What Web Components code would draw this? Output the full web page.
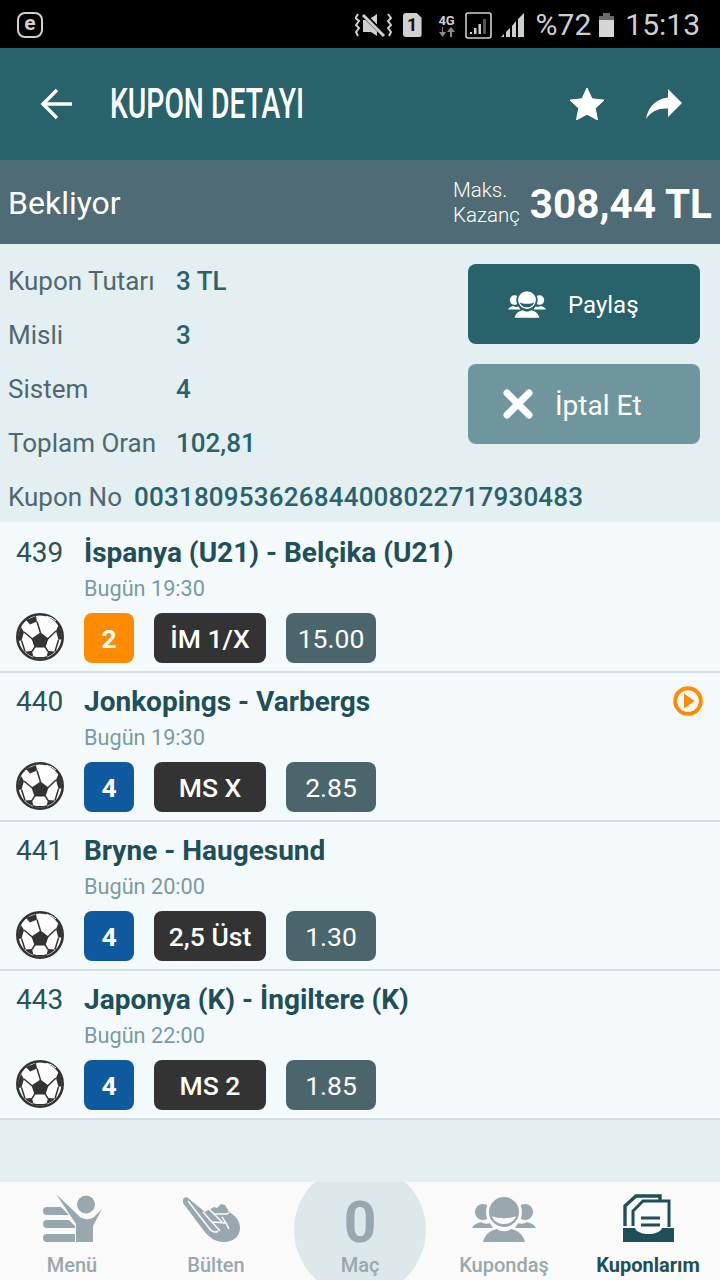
<!DOCTYPE html>
<html lang="tr">
<head>
<meta charset="utf-8">
<title>Kupon Detayı</title>
<style>
    html, body { margin: 0; padding: 0; }
    body {
        width: 720px;
        height: 1280px;
        overflow: hidden;
        display: flex;
        flex-direction: column;
        background: #e4eff2;
        font-family: Roboto, "Noto Sans", sans-serif;
    }
    match-list { flex: 1; }
</style>
</head>
<body>
<status-bar></status-bar>
<app-bar>KUPON DETAYI</app-bar>
<state-bar state="Bekliyor" amount="308,44 TL"></state-bar>
<coupon-info>
    <info-line label="Kupon Tutarı">3 TL</info-line>
    <info-line label="Misli">3</info-line>
    <info-line label="Sistem">4</info-line>
    <info-line label="Toplam Oran">102,81</info-line>
    <action-button slot="actions" icon="people" text="Paylaş"></action-button>
    <action-button slot="actions" icon="close" text="İptal Et" muted></action-button>
    <span slot="number-label">Kupon No</span>
    <span slot="number">003180953626844008022717930483</span>
</coupon-info>
<match-list>
    <match-row code="439" date="Bugün 19:30" system="2" system-color="#ff8c00" bet="İM 1/X" odd="15.00">İspanya (U21) - Belçika (U21)</match-row>
    <match-row code="440" date="Bugün 19:30" system="4" system-color="#0f5a9e" bet="MS X" odd="2.85" live>Jonkopings - Varbergs</match-row>
    <match-row code="441" date="Bugün 20:00" system="4" system-color="#0f5a9e" bet="2,5 Üst" odd="1.30">Bryne - Haugesund</match-row>
    <match-row code="443" date="Bugün 22:00" system="4" system-color="#0f5a9e" bet="MS 2" odd="1.85">Japonya (K) - İngiltere (K)</match-row>
</match-list>
<bottom-nav>
    <nav-item icon="menu" text="Menü"></nav-item>
    <nav-item icon="bulletin" text="Bülten"></nav-item>
    <nav-item count="0" text="Maç"></nav-item>
    <nav-item icon="people" text="Kupondaş"></nav-item>
    <nav-item icon="coupons" text="Kuponlarım" active></nav-item>
</bottom-nav>

<script>
// all icons in one place, fill comes from currentColor
const ICONS = {
    back: `<svg width="32" height="32" viewBox="0 0 32 32" fill="none" stroke="currentColor" stroke-width="3.4"><path d="M32 16H3M17 2 3 16l14 14"/></svg>`,
    star: `<svg width="34" height="32" viewBox="0 0 34 32" fill="currentColor"><path d="M17 0l5 10.800 12 1.300-8.800 8.200 2.400 11.700L17 26.200 6.400 32l2.400-11.700L0 12.100l12-1.300z" stroke="currentColor" stroke-linejoin="round"/></svg>`,
    share: `<svg width="36" height="30" viewBox="0 0 36 30" fill="currentColor"><path d="M22 0l14 14-14 14v-8.500C13 19 5 22 0 30c2-12 10-20 22-21.500z"/></svg>`,
    close: `<svg width="30" height="30" viewBox="0 0 30 30" fill="none" stroke="currentColor" stroke-width="7" stroke-linecap="round"><path d="M4 4l22 22M26 4 4 26"/></svg>`,
    people: `<svg width="64" height="45" viewBox="0 0 64 45" fill="currentColor">
        <circle cx="11" cy="15" r="8"/><circle cx="53" cy="15" r="8"/>
        <path d="M0 31c2-4 6-5 9-6 3 2 6 2 9 1l3 5zM64 31c-2-4-6-5-9-6-3 2-6 2-9 1l-3 5z"/>
        <circle cx="32" cy="15" r="16.500" stroke="var(--icon-gap, #fafafa)" stroke-width="3"/>
        <path d="M20 19c5 3 19 3 24 0-2 6-7 8-12 8s-10-2-12-8z" fill="var(--icon-gap, #fafafa)"/>
        <path d="M11 45c2-9 9-12 14-13 4 3 10 3 14 0 5 1 12 4 14 13z"/>
    </svg>`,
    menu: `<svg width="59" height="48" viewBox="0 0 59 48" fill="currentColor">
        <circle cx="43" cy="10.500" r="9"/>
        <path d="M13 0l23 22c4 4 11 4 15 1l8-8-9 17v16H33V30z"/>
        <path d="M4 13h14l8 8H4a4 4 0 0 1 0-8zM4 26h22l6 6v2H4a4 4 0 0 1 0-8zM4 40h28v8H4a4 4 0 0 1 0-8z"/>
    </svg>`,
    bulletin: `<svg width="58" height="45" viewBox="0 0 58 45" fill="currentColor" style="margin-right:10px">
        <path d="M1 3a3 3 0 0 1 5-2l17 14 9-5 3 1 4-4 4 1 4 7c7 4 11 9 11 16 0 9-8 14-16 14-9 0-14-4-20-11L1 6z"/>
        <path d="M6 4l21 27c3 4 6 5 9 3M21 15l17 19M27 12l14 14M31 17h13l3-1M31 25l13 1-4-6M44 26l3 6" fill="none" stroke="#fafafa" stroke-width="1.600"/>
    </svg>`,
    coupons: `<svg width="51" height="48" viewBox="0 0 51 48" fill="currentColor">
        <path d="M2 32V12L13 2h24v4" fill="none" stroke="currentColor" stroke-width="3.400"/>
        <path d="M10 32V17L20 7h26v26" fill="none" stroke="currentColor" stroke-width="3"/>
        <path d="M18 22.500h19v3H18zM18 29.500h19v3H18z"/>
        <path d="M0 34h12c3 8 24 8 27 0h12v14H0z"/>
    </svg>`,
    play: `<svg width="30" height="30" viewBox="0 0 30 30"><circle cx="15" cy="15" r="12.800" fill="none" stroke="#ff8c00" stroke-width="4"/><path d="M11 7.500 21.500 15 11 22.500z" fill="#ff8c00"/></svg>`,
    ball: `<svg width="48" height="48" viewBox="0 0 48 48">
        <circle cx="24" cy="24" r="22.700" fill="#fff" stroke="#333" stroke-width="2.600"/>
        <path fill="#333" d="M24.500 19.500l8 6-3 9H18.500l-3-9zM10 7l10-4 1 5.500L14 11.500zM40 18l2.500-6c2.500 4 3.500 9 3.500 14l-3.500 1zM2 28c-.3-5 1-10 3-14l3 5L5.500 27.500zM9 38.500l7-.5 1.500 6c-3.500-1-6.500-3-8.500-5.500zM39 38.500l-7-.5-1.500 6c3.500-1 6.500-3 8.500-5.500z"/>
        <path fill="none" stroke="#333" stroke-width="1.500" d="M24.500 20 21 8.500M31.700 26 40 18M16.300 26 8 19M19 33.700 16 38.500M29 33.700 32 38.500M5.500 27.500 9 38.500M42.500 27 39 38.500M17 44c4 1 10 1 14 0"/>
        <path fill="none" stroke="#fff" stroke-width="1" d="M30 3.200Q36 4 40 8"/>
    </svg>`
};

class StatusBar extends HTMLElement {
    constructor() {
        super();
        this.attachShadow({ mode: 'open' });
        this.shadowRoot.innerHTML = `
            <style>
                :host {
                    display: flex;
                    align-items: center;
                    height: 48px;
                    flex: none;
                    background: #000;
                    color: #cfcfcf;
                    box-sizing: border-box;
                    padding: 2px 20px 0 17px;
                }
                .logo {
                    width: 26px;
                    height: 26px;
                    box-sizing: border-box;
                    border: 2.500px solid #cfcfcf;
                    border-radius: 8px;
                    display: flex;
                    align-items: center;
                    justify-content: center;
                    font: bold 21px/1 Roboto, sans-serif;
                    padding-bottom: 3px;
                }
                .space { flex: 1; }
                .text { font: 30px/1 Roboto, sans-serif; }
                .net { display: flex; flex-direction: column; align-items: center; width: 18px; font: bold 13px/13px Roboto, sans-serif; }
                svg { display: block; }
                .sim {
                    width: 19px;
                    height: 24px;
                    background: #cfcfcf;
                    color: #111;
                    font: bold 18px/24px Roboto, sans-serif;
                    text-align: center;
                    border-radius: 3px;
                    clip-path: polygon(0 0, 75% 0, 100% 20%, 100% 100%, 0 100%);
                }
            </style>
            <div class="logo">e</div>
            <div class="space"></div>
            <svg width="37" height="24" viewBox="0 0 37 24" fill="none" stroke="#cfcfcf" stroke-width="2">
                <path d="M3 1 0.500 5 4 8 1 12l3 3-3 4 2 4M33 1l3 4-3 3 3 4-3 3 3 4-2 4"/>
                <path d="M8 7h5l9-6v22l-6-4H8z" fill="#cfcfcf" stroke="none"/>
                <path d="M8 1l21 21" stroke="#000" stroke-width="5"/>
                <path d="M8 2l21 21" stroke="#cfcfcf" stroke-width="3"/>
            </svg>
            <div class="sim" style="margin-left:11px">1</div>
            <div class="net" style="margin-left:16px">4G
                <svg width="16" height="10" viewBox="0 0 16 10" fill="#8a8a8a"><path d="M4 0v5h3L3.500 10 0 5h3V0zM12 0l4 5h-3v5h-2V5H8z"/></svg>
            </div>
            <svg style="margin-left:9px" width="27" height="27" viewBox="0 0 27 27">
                <rect x="1" y="1" width="25" height="25" rx="2" fill="none" stroke="#cfcfcf" stroke-width="1.600"/>
                <path d="M5 20h2v2H5zM9 16h2.500v6H9zM13.500 12h2.500v10h-2.500z" fill="#cfcfcf"/><path d="M18 7h3v15h-3z" fill="#555"/>
            </svg>
            <svg style="margin-left:9px" width="24" height="24" viewBox="0 0 24 24" fill="#cfcfcf"><path d="M0 24l3-3v3zM5 19l4-4v9H5zM11 13l4-5v16h-4zM17 6l6-6v24h-6z"/></svg>
            <span class="text" style="margin-left:11px">%72</span>
            <svg style="margin-left:8px" width="15" height="24" viewBox="0 0 15 24"><path d="M4 0h7v3h4v21H0V3h4z" fill="#6b6b6b"/><path d="M0 7h15v17H0z" fill="#d6d6d6"/></svg>
            <span class="text" style="margin-left:11px">15:13</span>
        `;
    }
}

class AppBar extends HTMLElement {
    constructor() {
        super();
        this.attachShadow({ mode: 'open' });
        this.shadowRoot.innerHTML = `
            <style>
                :host {
                    display: flex;
                    align-items: center;
                    flex: none;
                    height: 112px;
                    background: #28626b;
                    color: #fff;
                    box-sizing: border-box;
                    padding: 0 38px 0 40px;
                }
                svg { display: block; }
                .title {
                    margin-left: 38px;
                    flex: 1;
                    font: 500 42px/1 Roboto, sans-serif;
                    white-space: nowrap;
                    transform: scaleX(0.673);
                    transform-origin: left center;
                }
                .star { margin-right: 42px; }
            </style>
            ${ICONS.back}
            <div class="title"><slot></slot></div>
            <div class="star">${ICONS.star}</div>
            ${ICONS.share}
        `;
    }
}

class StateBar extends HTMLElement {
    constructor() {
        super();
        this.attachShadow({ mode: 'open' });
        this.shadowRoot.innerHTML = `
            <style>
                :host {
                    display: flex;
                    align-items: center;
                    flex: none;
                    height: 84px;
                    background: #4f6b75;
                    color: #fff;
                    box-sizing: border-box;
                    padding: 2px 8px 0;
                }
                .state { flex: 1; font-size: 32px; }
                .label { font-size: 20.500px; font-weight: 300; line-height: 25px; margin-right: 10px; }
                .amount { font-size: 40.500px; font-weight: 700; padding-top: 2px; }
            </style>
            <div class="state"></div>
            <div class="label">Maks.<br>Kazanç</div>
            <div class="amount"></div>
        `;
    }

    connectedCallback() {
        this.shadowRoot.querySelector('.state').textContent = this.getAttribute('state');
        this.shadowRoot.querySelector('.amount').textContent = this.getAttribute('amount');
    }
}

class CouponInfo extends HTMLElement {
    constructor() {
        super();
        this.attachShadow({ mode: 'open' });
        this.shadowRoot.innerHTML = `
            <style>
                :host {
                    display: block;
                    flex: none;
                    height: 278px;
                    box-sizing: border-box;
                    padding: 10px 20px 0 8px;
                    background: #e4eff2;
                    font-size: 26px;
                    color: #4f6870;
                }
                .top { display: flex; justify-content: space-between; }
                .actions { display: flex; flex-direction: column; gap: 20px; padding-top: 10px; }
                .number { display: flex; gap: 12px; height: 54px; align-items: center; }
                .code { font-weight: 500; color: #28626b; letter-spacing: 0.2px; }
            </style>
            <div class="top">
                <div><slot></slot></div>
                <div class="actions"><slot name="actions"></slot></div>
            </div>
            <div class="number"><slot name="number-label"></slot><span class="code"><slot name="number"></slot></span></div>
        `;
    }
}

class InfoLine extends HTMLElement {
    constructor() {
        super();
        this.attachShadow({ mode: 'open' });
        this.shadowRoot.innerHTML = `
            <style>
                :host { display: flex; align-items: center; height: 54px; }
                .label { width: 168px; white-space: nowrap; }
                .value { font-weight: 500; color: #28626b; }
            </style>
            <div class="label"></div>
            <div class="value"><slot></slot></div>
        `;
    }

    connectedCallback() {
        this.shadowRoot.querySelector('.label').textContent = this.getAttribute('label');
    }
}

class ActionButton extends HTMLElement {
    constructor() {
        super();
        this.attachShadow({ mode: 'open' });
        this.shadowRoot.innerHTML = `
            <style>
                :host {
                    display: flex;
                    align-items: center;
                    width: 232px;
                    height: 80px;
                    box-sizing: border-box;
                    border-radius: 8px;
                    background: #28626b;
                    color: #fff;
                    --icon-gap: #28626b;
                    padding: 2px 0 0 40px;
                    gap: 22px;
                    font-size: 24px;
                }
                :host([muted]) {
                    background: #70969d;
                    --icon-gap: #70969d;
                    padding-left: 35px;
                    gap: 22px;
                    font-size: 28px;
                }
                .icon { display: flex; margin-top: -2px; }
                :host(:not([muted])) svg { width: 38px; height: 27px; }
            </style>
            <div class="icon"></div>
            <span class="text"></span>
        `;
    }

    connectedCallback() {
        this.shadowRoot.querySelector('.icon').innerHTML = ICONS[this.getAttribute('icon')];
        this.shadowRoot.querySelector('.text').textContent = this.getAttribute('text');
    }
}

class MatchList extends HTMLElement {
    constructor() {
        super();
        this.attachShadow({ mode: 'open' });
        this.shadowRoot.innerHTML = `
            <style>
                :host { display: block; }
                .lead { height: 2px; background: #f4fafb; }
            </style>
            <div class="lead"></div>
            <slot></slot>
        `;
    }
}

class MatchRow extends HTMLElement {
    constructor() {
        super();
        this.attachShadow({ mode: 'open' });
        this.shadowRoot.innerHTML = `
            <style>
                :host {
                    display: grid;
                    grid-template-columns: 68px 1fr;
                    grid-template-rows: 40px 32px 50px;
                    box-sizing: border-box;
                    height: 149px;
                    padding: 9px 17px 0 16px;
                    background: #f4fafb;
                    border-bottom: 2px solid #d2dee4;
                }
                .code { font-size: 28px; line-height: 40px; color: #28535c; }
                .head { display: flex; align-items: center; justify-content: space-between; margin-top: -2px; }
                .title { font-size: 28px; font-weight: 700; color: #1f4f58; white-space: nowrap; }
                .date { grid-column: 2; font-size: 21.700px; line-height: 32px; color: #7a9aa1; }
                .ball { margin-top: 8px; }
                .ball svg { display: block; }
                .bets { display: flex; gap: 20px; margin-top: 8px; height: 50px; }
                .pill {
                    display: flex;
                    align-items: center;
                    justify-content: center;
                    box-sizing: border-box;
                    height: 50px;
                    border-radius: 8px;
                    color: #fff;
                    font-size: 26.500px;
                }
                .system { width: 50px; font-weight: 700; }
                .bet { width: 112px; background: #333; font-weight: 500; }
                .odd { width: 90px; background: #4a666c; }
                .live { display: flex; }
            </style>
            <div class="code"></div>
            <div class="head"><div class="title"><slot></slot></div><div class="live"></div></div>
            <div class="date"></div>
            <div class="ball">${ICONS.ball}</div>
            <div class="bets">
                <div class="pill system"></div>
                <div class="pill bet"></div>
                <div class="pill odd"></div>
            </div>
        `;
    }

    connectedCallback() {
        const root = this.shadowRoot;
        root.querySelector('.code').textContent = this.getAttribute('code');
        root.querySelector('.date').textContent = this.getAttribute('date');
        const system = root.querySelector('.system');
        system.textContent = this.getAttribute('system');
        system.style.background = this.getAttribute('system-color');
        root.querySelector('.bet').textContent = this.getAttribute('bet');
        root.querySelector('.odd').textContent = this.getAttribute('odd');
        if (this.hasAttribute('live')) {
            root.querySelector('.live').innerHTML = ICONS.play;
        }
    }
}

class BottomNav extends HTMLElement {
    constructor() {
        super();
        this.attachShadow({ mode: 'open' });
        this.shadowRoot.innerHTML = `
            <style>
                :host {
                    display: grid;
                    grid-template-columns: repeat(5, 144px);
                    flex: none;
                    height: 98px;
                    background: #fafafa;
                    position: relative;
                    overflow: hidden;
                }
                .bubble {
                    position: absolute;
                    left: 294px;
                    top: -18px;
                    width: 132px;
                    height: 132px;
                    border-radius: 50%;
                    background: #dde8ea;
                }
            </style>
            <div class="bubble"></div>
            <slot></slot>
        `;
    }
}

class NavItem extends HTMLElement {
    constructor() {
        super();
        this.attachShadow({ mode: 'open' });
        this.shadowRoot.innerHTML = `
            <style>
                :host {
                    display: flex;
                    flex-direction: column;
                    align-items: center;
                    position: relative;
                    color: #98a8ae;
                }
                :host([active]) { color: #1f4f58; }
                .icon {
                    height: 60px;
                    display: flex;
                    align-items: flex-end;
                }
                .count { font-size: 57px; font-weight: 700; line-height: 38px; }
                .text { font-size: 20px; font-weight: 500; line-height: 24px; margin-top: 11px; white-space: nowrap; }
                :host([active]) .text { font-weight: 700; }
            </style>
            <div class="icon"></div>
            <div class="text"></div>
        `;
    }

    connectedCallback() {
        const icon = this.shadowRoot.querySelector('.icon');
        if (this.hasAttribute('count')) {
            icon.innerHTML = `<span class="count">${this.getAttribute('count')}</span>`;
        } else {
            icon.innerHTML = ICONS[this.getAttribute('icon')];
        }
        this.shadowRoot.querySelector('.text').textContent = this.getAttribute('text');
    }
}

customElements.define('status-bar', StatusBar);
customElements.define('app-bar', AppBar);
customElements.define('state-bar', StateBar);
customElements.define('coupon-info', CouponInfo);
customElements.define('info-line', InfoLine);
customElements.define('action-button', ActionButton);
customElements.define('match-list', MatchList);
customElements.define('match-row', MatchRow);
customElements.define('bottom-nav', BottomNav);
customElements.define('nav-item', NavItem);
</script>
</body>
</html>
